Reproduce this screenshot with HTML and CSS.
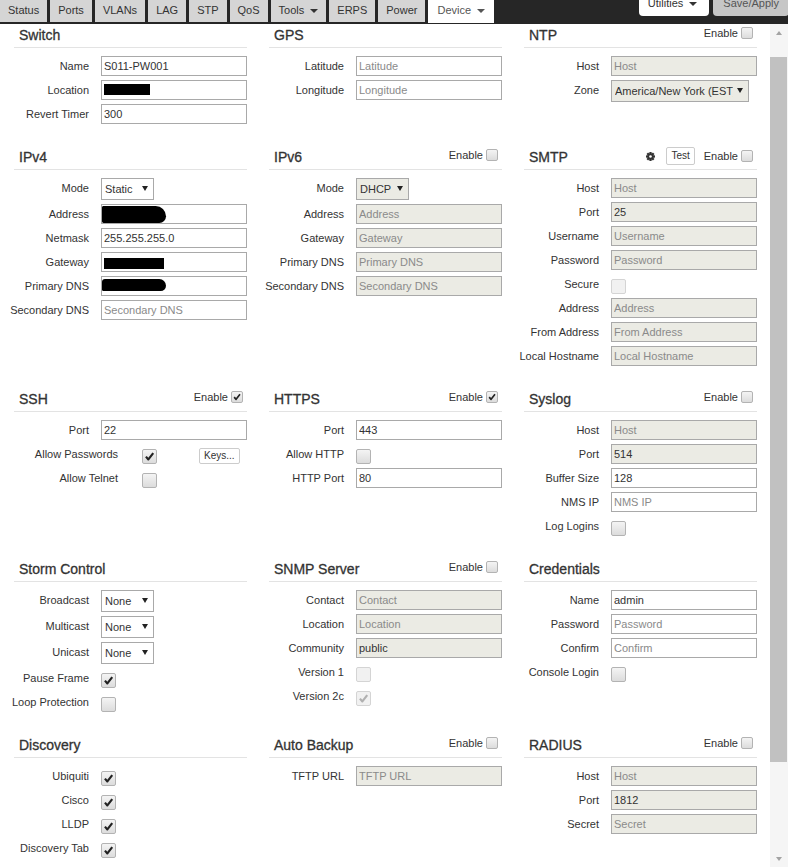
FILE: index.html
```html
<!DOCTYPE html>
<html lang="en">
<head>
<meta charset="utf-8">
<title>Device</title>
<link rel="stylesheet" href="styles.css">
</head>
<body>
<header class="topbar">
  <nav class="tabs">
    <a class="tab">Status</a>
    <a class="tab">Ports</a>
    <a class="tab">VLANs</a>
    <a class="tab">LAG</a>
    <a class="tab">STP</a>
    <a class="tab">QoS</a>
    <a class="tab">Tools <span class="caret"></span></a>
    <a class="tab">ERPS</a>
    <a class="tab">Power</a>
    <a class="tab active">Device <span class="caret"></span></a>
  </nav>
  <div class="actions">
    <button class="top-btn util">Utilities <span class="caret"></span></button>
    <button class="top-btn save">Save/Apply</button>
  </div>
</header>

<div class="frame">
  <main class="content">

    <!-- row 1 -->
    <section class="panel">
      <div class="panel-head"><h3 class="panel-title">Switch</h3></div>
      <div class="panel-body">
        <div class="row"><label class="row-label">Name</label><input class="field" type="text" value="S011-PW001"></div>
        <div class="row"><label class="row-label">Location</label><div class="field fake"><span class="redact r-loc"></span></div></div>
        <div class="row"><label class="row-label">Revert Timer</label><input class="field" type="text" value="300"></div>
      </div>
    </section>

    <section class="panel">
      <div class="panel-head"><h3 class="panel-title">GPS</h3></div>
      <div class="panel-body">
        <div class="row"><label class="row-label">Latitude</label><input class="field" type="text" placeholder="Latitude"></div>
        <div class="row"><label class="row-label">Longitude</label><input class="field" type="text" placeholder="Longitude"></div>
      </div>
    </section>

    <section class="panel">
      <div class="panel-head">
        <h3 class="panel-title">NTP</h3>
        <div class="enable">Enable <span class="cb sm"></span></div>
      </div>
      <div class="panel-body">
        <div class="row"><label class="row-label">Host</label><input class="field" type="text" placeholder="Host" disabled></div>
        <div class="row"><label class="row-label">Zone</label><span class="select zone"><select disabled><option>America/New York (EST)</option></select></span></div>
      </div>
    </section>

    <!-- row 2 -->
    <section class="panel">
      <div class="panel-head"><h3 class="panel-title">IPv4</h3></div>
      <div class="panel-body">
        <div class="row"><label class="row-label">Mode</label><span class="select"><select><option>Static</option><option>DHCP</option></select></span></div>
        <div class="row"><label class="row-label">Address</label><div class="field fake"><span class="redact r-addr"></span></div></div>
        <div class="row"><label class="row-label">Netmask</label><input class="field" type="text" value="255.255.255.0"></div>
        <div class="row"><label class="row-label">Gateway</label><div class="field fake"><span class="redact r-gw"></span></div></div>
        <div class="row"><label class="row-label">Primary DNS</label><div class="field fake"><span class="redact r-dns"></span></div></div>
        <div class="row"><label class="row-label">Secondary DNS</label><input class="field" type="text" placeholder="Secondary DNS"></div>
      </div>
    </section>

    <section class="panel">
      <div class="panel-head">
        <h3 class="panel-title">IPv6</h3>
        <div class="enable">Enable <span class="cb sm"></span></div>
      </div>
      <div class="panel-body">
        <div class="row"><label class="row-label">Mode</label><span class="select"><select disabled><option>DHCP</option></select></span></div>
        <div class="row"><label class="row-label">Address</label><input class="field" type="text" placeholder="Address" disabled></div>
        <div class="row"><label class="row-label">Gateway</label><input class="field" type="text" placeholder="Gateway" disabled></div>
        <div class="row"><label class="row-label">Primary DNS</label><input class="field" type="text" placeholder="Primary DNS" disabled></div>
        <div class="row"><label class="row-label">Secondary DNS</label><input class="field" type="text" placeholder="Secondary DNS" disabled></div>
      </div>
    </section>

    <section class="panel">
      <div class="panel-head">
        <h3 class="panel-title">SMTP</h3>
        <div class="head-tools">
          <svg class="gear" width="9" height="9" viewBox="0 0 16 16" aria-hidden="true">
            <g fill="#333">
              <rect x="6" y="0" width="4" height="16"/>
              <rect x="6" y="0" width="4" height="16" transform="rotate(45 8 8)"/>
              <rect x="6" y="0" width="4" height="16" transform="rotate(90 8 8)"/>
              <rect x="6" y="0" width="4" height="16" transform="rotate(135 8 8)"/>
              <circle cx="8" cy="8" r="5.6"/>
            </g>
            <circle cx="8" cy="8" r="2.3" fill="#fff"/>
          </svg>
          <button class="small-btn test">Test</button>
          <div class="enable inline">Enable <span class="cb sm"></span></div>
        </div>
      </div>
      <div class="panel-body">
        <div class="row"><label class="row-label">Host</label><input class="field" type="text" placeholder="Host" disabled></div>
        <div class="row"><label class="row-label">Port</label><input class="field" type="text" value="25" disabled></div>
        <div class="row"><label class="row-label">Username</label><input class="field" type="text" placeholder="Username" disabled></div>
        <div class="row"><label class="row-label">Password</label><input class="field" type="password" placeholder="Password" disabled></div>
        <div class="row"><label class="row-label">Secure</label><span class="cb off"></span></div>
        <div class="row"><label class="row-label">Address</label><input class="field" type="text" placeholder="Address" disabled></div>
        <div class="row"><label class="row-label">From Address</label><input class="field" type="text" placeholder="From Address" disabled></div>
        <div class="row"><label class="row-label">Local Hostname</label><input class="field" type="text" placeholder="Local Hostname" disabled></div>
      </div>
    </section>

    <!-- row 3 -->
    <section class="panel">
      <div class="panel-head">
        <h3 class="panel-title">SSH</h3>
        <div class="enable">Enable <span class="cb sm"><svg viewBox="0 0 12 12"><path d="M2.6 6.2 L4.9 8.8 L9.6 2.8"/></svg></span></div>
      </div>
      <div class="panel-body">
        <div class="row"><label class="row-label">Port</label><input class="field" type="text" value="22"></div>
        <div class="row wide"><label class="row-label">Allow Passwords</label><span class="cb"><svg viewBox="0 0 15 15"><path d="M3.4 7.6 L6.2 10.9 L11.8 3.6"/></svg></span><button class="small-btn keys">Keys...</button></div>
        <div class="row wide"><label class="row-label">Allow Telnet</label><span class="cb"></span></div>
      </div>
    </section>

    <section class="panel">
      <div class="panel-head">
        <h3 class="panel-title">HTTPS</h3>
        <div class="enable">Enable <span class="cb sm"><svg viewBox="0 0 12 12"><path d="M2.6 6.2 L4.9 8.8 L9.6 2.8"/></svg></span></div>
      </div>
      <div class="panel-body">
        <div class="row"><label class="row-label">Port</label><input class="field" type="text" value="443"></div>
        <div class="row"><label class="row-label">Allow HTTP</label><span class="cb"></span></div>
        <div class="row"><label class="row-label">HTTP Port</label><input class="field" type="text" value="80"></div>
      </div>
    </section>

    <section class="panel">
      <div class="panel-head">
        <h3 class="panel-title">Syslog</h3>
        <div class="enable">Enable <span class="cb sm"></span></div>
      </div>
      <div class="panel-body">
        <div class="row"><label class="row-label">Host</label><input class="field" type="text" placeholder="Host" disabled></div>
        <div class="row"><label class="row-label">Port</label><input class="field" type="text" value="514" disabled></div>
        <div class="row"><label class="row-label">Buffer Size</label><input class="field" type="text" value="128"></div>
        <div class="row"><label class="row-label">NMS IP</label><input class="field" type="text" placeholder="NMS IP"></div>
        <div class="row"><label class="row-label">Log Logins</label><span class="cb"></span></div>
      </div>
    </section>

    <!-- row 4 -->
    <section class="panel">
      <div class="panel-head"><h3 class="panel-title">Storm Control</h3></div>
      <div class="panel-body">
        <div class="row"><label class="row-label">Broadcast</label><span class="select"><select><option>None</option></select></span></div>
        <div class="row"><label class="row-label">Multicast</label><span class="select"><select><option>None</option></select></span></div>
        <div class="row"><label class="row-label">Unicast</label><span class="select"><select><option>None</option></select></span></div>
        <div class="row"><label class="row-label">Pause Frame</label><span class="cb"><svg viewBox="0 0 15 15"><path d="M3.4 7.6 L6.2 10.9 L11.8 3.6"/></svg></span></div>
        <div class="row"><label class="row-label">Loop Protection</label><span class="cb"></span></div>
      </div>
    </section>

    <section class="panel">
      <div class="panel-head">
        <h3 class="panel-title">SNMP Server</h3>
        <div class="enable">Enable <span class="cb sm"></span></div>
      </div>
      <div class="panel-body">
        <div class="row"><label class="row-label">Contact</label><input class="field" type="text" placeholder="Contact" disabled></div>
        <div class="row"><label class="row-label">Location</label><input class="field" type="text" placeholder="Location" disabled></div>
        <div class="row"><label class="row-label">Community</label><input class="field" type="text" value="public" disabled></div>
        <div class="row"><label class="row-label">Version 1</label><span class="cb off"></span></div>
        <div class="row"><label class="row-label">Version 2c</label><span class="cb off"><svg viewBox="0 0 15 15"><path d="M3.4 7.6 L6.2 10.9 L11.8 3.6"/></svg></span></div>
      </div>
    </section>

    <section class="panel">
      <div class="panel-head"><h3 class="panel-title">Credentials</h3></div>
      <div class="panel-body">
        <div class="row"><label class="row-label">Name</label><input class="field" type="text" value="admin"></div>
        <div class="row"><label class="row-label">Password</label><input class="field" type="password" placeholder="Password"></div>
        <div class="row"><label class="row-label">Confirm</label><input class="field" type="password" placeholder="Confirm"></div>
        <div class="row"><label class="row-label">Console Login</label><span class="cb"></span></div>
      </div>
    </section>

    <!-- row 5 -->
    <section class="panel">
      <div class="panel-head"><h3 class="panel-title">Discovery</h3></div>
      <div class="panel-body">
        <div class="row"><label class="row-label">Ubiquiti</label><span class="cb"><svg viewBox="0 0 15 15"><path d="M3.4 7.6 L6.2 10.9 L11.8 3.6"/></svg></span></div>
        <div class="row"><label class="row-label">Cisco</label><span class="cb"><svg viewBox="0 0 15 15"><path d="M3.4 7.6 L6.2 10.9 L11.8 3.6"/></svg></span></div>
        <div class="row"><label class="row-label">LLDP</label><span class="cb"><svg viewBox="0 0 15 15"><path d="M3.4 7.6 L6.2 10.9 L11.8 3.6"/></svg></span></div>
        <div class="row"><label class="row-label">Discovery Tab</label><span class="cb"><svg viewBox="0 0 15 15"><path d="M3.4 7.6 L6.2 10.9 L11.8 3.6"/></svg></span></div>
      </div>
    </section>

    <section class="panel">
      <div class="panel-head">
        <h3 class="panel-title">Auto Backup</h3>
        <div class="enable">Enable <span class="cb sm"></span></div>
      </div>
      <div class="panel-body">
        <div class="row"><label class="row-label">TFTP URL</label><input class="field" type="text" placeholder="TFTP URL" disabled></div>
      </div>
    </section>

    <section class="panel">
      <div class="panel-head">
        <h3 class="panel-title">RADIUS</h3>
        <div class="enable">Enable <span class="cb sm"></span></div>
      </div>
      <div class="panel-body">
        <div class="row"><label class="row-label">Host</label><input class="field" type="text" placeholder="Host" disabled></div>
        <div class="row"><label class="row-label">Port</label><input class="field" type="text" value="1812" disabled></div>
        <div class="row"><label class="row-label">Secret</label><input class="field" type="password" placeholder="Secret" disabled></div>
      </div>
    </section>

  </main>

  <div class="scrollbar" aria-hidden="true">
    <div class="sb-btn"><span class="sb-arrow up"></span></div>
    <div class="sb-thumb"></div>
    <div class="sb-track"></div>
    <div class="sb-btn"><span class="sb-arrow down"></span></div>
  </div>
</div>
</body>
</html>
```

FILE: styles.css
```css
* {
  box-sizing: border-box;
}

html,
body {
  margin: 0;
  padding: 0;
}

body {
  width: 788px;
  height: 867px;
  overflow: hidden;
  background: #fff;
  color: #333;
  font-family: "Liberation Sans", Arial, sans-serif;
  font-size: 11px;
}

/* ---------- top navigation ---------- */

.topbar {
  display: flex;
  align-items: flex-start;
  height: 24px;
  background: #262626;
  overflow: hidden;
}

.tabs {
  display: flex;
  gap: 3px;
}

.tab {
  height: 22px;
  padding: 0 8px;
  line-height: 21px;
  background: #d5d5d5;
  color: #333;
  white-space: nowrap;
}

.tab.active {
  height: 23px;
  padding: 0 9px;
  background: #fff;
  color: #555;
}

.caret {
  display: inline-block;
  width: 0;
  height: 0;
  margin-left: 3px;
  border-top: 4px solid currentColor;
  border-left: 4px solid transparent;
  border-right: 4px solid transparent;
  vertical-align: middle;
}

.actions {
  display: flex;
  gap: 4px;
  margin-left: auto;
  margin-right: -1px;
}

.top-btn {
  height: 26px;
  margin-top: -10px;
  border: 0;
  border-radius: 0 0 4px 4px;
  font-family: inherit;
  font-size: 11px;
  line-height: 26px;
  white-space: nowrap;
}

.top-btn.util {
  padding: 0 12px 0 9px;
  background: #fff;
  color: #333;
}

.top-btn.save {
  padding: 0 10px;
  background: #c6c6c6;
  color: #555;
}

/* ---------- page frame ---------- */

.frame {
  display: flex;
  height: 843px;
}

.content {
  flex: 1;
  display: grid;
  grid-template-columns: repeat(3, 233px);
  column-gap: 22px;
  row-gap: 23px;
  align-content: start;
  padding: 1px 0 0 14px;
}

/* ---------- panels ---------- */

.panel {
  display: flex;
  flex-direction: column;
}

.panel-head {
  display: flex;
  justify-content: space-between;
  align-items: flex-start;
  height: 23px;
  margin-bottom: 8px;
  padding-left: 5px;
  border-bottom: 1px solid #e3e3e3;
}

.panel-title {
  margin: 0;
  font-size: 14px;
  font-weight: normal;
  line-height: 20px;
  color: #333;
  -webkit-text-stroke: 0.3px #333;
}

.enable {
  display: flex;
  align-items: center;
  gap: 3px;
  margin: 1px 4px 0 0;
  font-size: 11px;
  line-height: 14px;
}

.enable.inline {
  margin: 0 4px 0 0;
}

.head-tools {
  display: flex;
  align-items: center;
  height: 18px;
}

.gear {
  display: block;
  margin-right: 11px;
}

.small-btn {
  padding: 0 4px;
  border: 1px solid #ccc;
  border-radius: 2px;
  background: #fff;
  color: #333;
  font-family: inherit;
  font-size: 10px;
}

.small-btn.test {
  height: 18px;
  margin-right: 9px;
  line-height: 16px;
}

.small-btn.keys {
  height: 16px;
  margin: 4px 0 0 42px;
  line-height: 14px;
}

.panel-body {
  display: flex;
  flex-direction: column;
  gap: 4px;
}

.row {
  display: grid;
  grid-template-columns: 75px 1fr;
  column-gap: 12px;
  align-items: start;
  justify-items: start;
}

.row.wide {
  display: flex;
  column-gap: 0;
}

.row.wide .row-label {
  flex: 0 0 104px;
  margin-right: 24px;
}

.row-label {
  display: flex;
  justify-content: flex-end;
  width: 100%;
  line-height: 20px;
  white-space: nowrap;
  color: #333;
}

/* ---------- form fields ---------- */

.field {
  display: block;
  width: 100%;
  height: 20px;
  margin: 0;
  padding: 0 2px;
  border: 1px solid #a9a9a9;
  border-radius: 0;
  background: #fff;
  color: #333;
  font-family: inherit;
  font-size: 11px;
  outline: none;
}

.field:disabled {
  background: #ebebe4;
  color: #333;
  opacity: 1;
}

.field::placeholder {
  color: #8a8a8a;
  opacity: 1;
}

.field.fake {
  display: flex;
  align-items: flex-start;
  padding: 0;
}

.redact {
  display: block;
  background: #000;
}

.r-loc {
  width: 46px;
  height: 11px;
  margin: 3px 0 0 2px;
}

.r-addr {
  width: 64px;
  height: 17px;
  margin: 1px 0 0 0;
  border-radius: 2px 14px 9px 2px;
}

.r-gw {
  width: 60px;
  height: 11px;
  margin: 5px 0 0 2px;
}

.r-dns {
  width: 64px;
  height: 12px;
  margin: 2px 0 0 0;
  border-radius: 4px 9px 7px 2px;
}

.select {
  position: relative;
  display: block;
  width: 53px;
}

.select.zone {
  width: 138px;
}

.select select {
  display: block;
  width: 100%;
  height: 22px;
  margin: 0;
  padding: 0 15px 0 3px;
  border: 1px solid #a9a9a9;
  border-radius: 0;
  background: #fff;
  color: #333;
  font-family: inherit;
  font-size: 11px;
  -webkit-appearance: none;
  appearance: none;
  outline: none;
}

.select select:disabled {
  background: #ebebe4;
  color: #333;
  opacity: 1;
}

.select::after {
  content: "";
  position: absolute;
  top: 8px;
  right: 6px;
  border-top: 5px solid #222;
  border-left: 3px solid transparent;
  border-right: 3px solid transparent;
  pointer-events: none;
}

/* ---------- checkboxes ---------- */

.cb {
  display: block;
  flex: none;
  width: 15px;
  height: 15px;
  margin-top: 5px;
  border: 1px solid #b3b3b3;
  border-radius: 2px;
  background: linear-gradient(#f4f4f4, #dcdcdc);
}

.cb svg {
  display: block;
  width: 100%;
  height: 100%;
}

.cb path {
  fill: none;
  stroke: #222;
  stroke-width: 2.5;
  stroke-linejoin: round;
}

.cb.sm {
  width: 12px;
  height: 12px;
  margin-top: 0;
}

.cb.sm path {
  stroke-width: 2;
}

.cb.off {
  border-color: #d4d4d4;
  background: #f1f1f1;
}

.cb.off path {
  stroke: #b0b0b0;
}

/* ---------- scrollbar ---------- */

.scrollbar {
  display: flex;
  flex-direction: column;
  width: 18px;
  background: #f5f5f5;
}

.sb-btn {
  display: flex;
  justify-content: center;
  align-items: center;
  height: 17px;
  flex: none;
}

.sb-arrow {
  width: 0;
  height: 0;
  border-left: 3px solid transparent;
  border-right: 3px solid transparent;
}

.sb-arrow.up {
  border-bottom: 4px solid #a3a3a3;
}

.sb-arrow.down {
  border-top: 4px solid #a3a3a3;
}

.sb-thumb {
  flex: none;
  height: 705px;
  margin: 16px 1px 0 0;
  background: #c1c1c1;
}

.sb-track {
  flex: 1;
}
```
